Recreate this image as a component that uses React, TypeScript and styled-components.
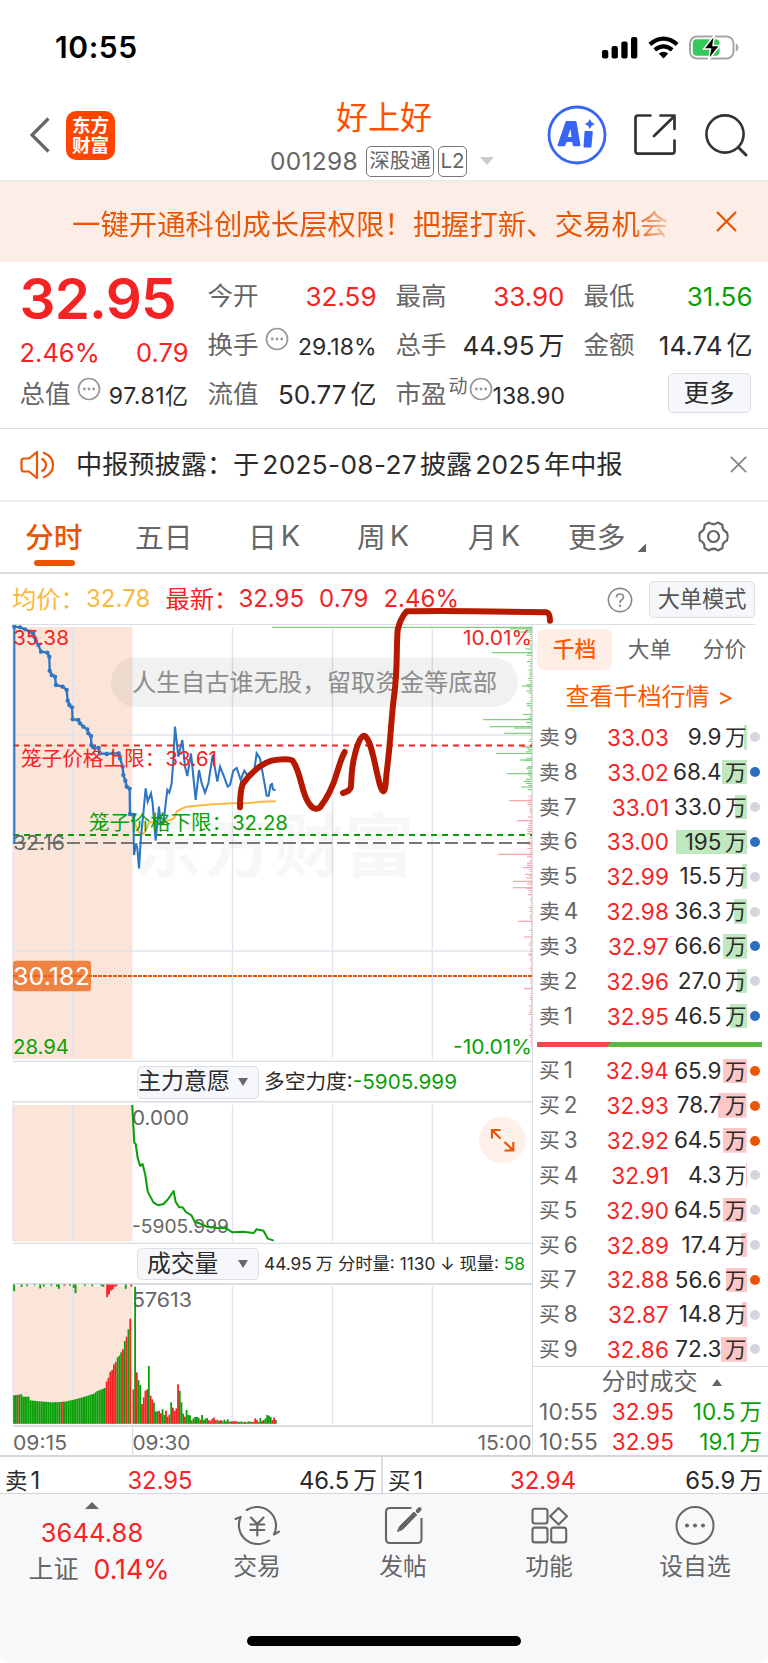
import React from "react";
import styled, { createGlobalStyle } from "styled-components";

const RED = "#f52323";
const GREEN = "#0a9f08";
const ORANGE = "#ea5504";
const GREY = "#666666";
const INK = "#2b2b2b";
const LINE = "#dcdde3";
const PEACH = "#fbe5d9";
const FONT = `Inter, "Noto Sans CJK SC", sans-serif`;

const Global = createGlobalStyle`
  * { box-sizing: border-box; }
  body { margin: 0; background: #fff; font-family: ${FONT}; color: ${INK}; }
  svg { display: block; flex: none; }
`;

const Page = styled.div`
  position: relative;
  width: 768px;
  height: 1663px;
  overflow: hidden;
  background: #fff;
  white-space: nowrap;
`;

const Txt = styled.span<{ $s: number; $c?: string; $ls?: number; $w?: number; $ml?: number }>`
  font-size: ${(p) => p.$s}px;
  line-height: 1.2;
  color: ${(p) => p.$c || INK};
  letter-spacing: ${(p) => p.$ls || 0}px;
  font-weight: ${(p) => p.$w || 400};
  margin-left: ${(p) => p.$ml || 0}px;
  white-space: nowrap;
`;
const Unit = styled.span`
  margin-left: 4px;
`;

/* ---------- status bar ---------- */
const StatusBar = styled.div`
  height: 90px;
  padding: 4px 29px 0 55px;
  display: flex;
  align-items: center;
  justify-content: space-between;
`;
const StatusIcons = styled.div`
  display: flex;
  align-items: center;
  gap: 10px;
`;

/* ---------- header ---------- */
const Header = styled.header`
  height: 92px;
  border-bottom: 2px solid #ececee;
  display: grid;
  grid-template-columns: 230px 1fr 230px;
  padding: 0 19px 0 29px;
`;
const HeaderLeft = styled.div`
  display: flex;
  align-items: center;
  gap: 15px;
`;
const Logo = styled.div`
  width: 49px;
  height: 49px;
  border-radius: 10px;
  background: #ff4400;
  color: #fff;
  font: 700 18.5px/20px ${FONT};
  display: flex;
  flex-direction: column;
  align-items: center;
  justify-content: center;
`;
const HeaderTitle = styled.div`
  display: flex;
  flex-direction: column;
  align-items: center;
  padding: 9px 10px 0 0;
`;
const CodeLine = styled.div`
  display: flex;
  align-items: center;
  margin: 8px 0 0 -4px;
  height: 32px;
`;
const Tag = styled.span<{ $w: number; $gap: number }>`
  width: ${(p) => p.$w}px;
  height: 31px;
  margin-left: ${(p) => p.$gap}px;
  border: 1.5px solid #777;
  border-radius: 5px;
  color: ${GREY};
  font-size: 20.5px;
  line-height: 27px;
  text-align: center;
`;
const Caret = styled.span<{ $w: number; $h: number; $c?: string; $up?: boolean; $ml?: number }>`
  width: 0;
  height: 0;
  flex: none;
  margin-left: ${(p) => p.$ml || 0}px;
  border: solid transparent;
  border-width: 0 ${(p) => p.$w / 2}px;
  ${(p) => (p.$up ? "border-bottom" : "border-top")}: ${(p) => p.$h}px solid ${(p) => p.$c || GREY};
`;
const HeaderRight = styled.div`
  display: flex;
  align-items: center;
  justify-content: flex-end;
  padding-right: 1px;
  gap: 27px;
  > :last-child {
    margin-left: 2px;
  }
`;

/* ---------- promo banner ---------- */
const Promo = styled.div`
  height: 80px;
  background: #fceee6;
  padding: 0 31px 0 72px;
  display: flex;
  align-items: center;
  justify-content: space-between;
  svg {
    margin-bottom: 2px;
  }
`;
const PromoText = styled.span`
  font-size: 28.4px;
  background: linear-gradient(90deg, ${ORANGE} 94%, #fceee6 102%);
  background-clip: text;
  -webkit-background-clip: text;
  color: transparent;
`;

/* ---------- figures ---------- */
const Figures = styled.section`
  height: 167px;
  border-bottom: 1.5px solid #dedfe2;
  padding: 9.5px 15.5px 0 19.5px;
  display: grid;
  grid-template-columns: repeat(4, 169px);
  column-gap: 19px;
`;
const FigCol = styled.div`
  display: flex;
  flex-direction: column;
`;
const Fig = styled.div<{ $drop?: number; $all?: boolean }>`
  height: 49.3px;
  display: flex;
  align-items: center;
  justify-content: space-between;
  padding-top: ${(p) => (p.$all ? (p.$drop || 0) * 2 : 0)}px;
  > :last-child {
    margin-top: ${(p) => (p.$all ? 0 : (p.$drop || 0) * 2)}px;
  }
`;
const LabelGroup = styled.div`
  display: flex;
  align-items: center;
  svg {
    margin: 0 0 12px 6px;
  }
`;
const Sup = styled.span`
  font-size: 19px;
  line-height: 24px;
  color: ${GREY};
  margin: 0 -5px 16px 2px;
`;
const Button = styled.button<{ $w: number; $h: number; $s: number; $c?: string; $ml?: number; $mr?: number }>`
  width: ${(p) => p.$w}px;
  height: ${(p) => p.$h}px;
  flex: none;
  margin: 0 ${(p) => p.$mr || 0}px 0 ${(p) => p.$ml || 0}px;
  padding: 0;
  border: 1.5px solid #dcdee3;
  border-radius: 5px;
  background: #f6f7fa;
  color: ${(p) => p.$c || INK};
  font: 400 ${(p) => p.$s}px ${FONT};
  line-height: 1.2;
  display: flex;
  align-items: center;
  justify-content: center;
`;

/* ---------- news ---------- */
const News = styled.div`
  height: 73px;
  border-bottom: 2px solid #ececee;
  padding: 0 21px 4px 20px;
  display: flex;
  align-items: center;
  svg {
    position: relative;
    top: 2px;
  }
`;
const NewsText = styled.span`
  flex: 1;
  margin-left: 21px;
  font-size: 26.2px;
  b {
    font-weight: 400;
    margin: 0 3px;
    letter-spacing: 0.35px;
  }
`;

/* ---------- tabs ---------- */
const Tabs = styled.nav`
  height: 72px;
  border-bottom: 2px solid #d9dbe3;
  padding: 0 38px 3px 25px;
  display: grid;
  grid-template-columns: 110px 113px 109px 111px 100px 128px 1fr;
  align-items: center;
  svg {
    margin: 2px 0 0 1px;
  }
`;
const Tab = styled.div<{ $on?: boolean }>`
  position: relative;
  font-size: 28.8px;
  font-weight: ${(p) => (p.$on ? 500 : 400)};
  color: ${(p) => (p.$on ? ORANGE : GREY)};
  display: flex;
  align-items: center;
  gap: 4px;
  &::after {
    content: "";
    display: ${(p) => (p.$on ? "block" : "none")};
    position: absolute;
    left: 9px;
    width: 41px;
    bottom: -10px;
    height: 6px;
    border-radius: 3px;
    background: ${ORANGE};
  }
`;
const Corner = styled.span`
  width: 8px;
  height: 9px;
  margin: 23px 0 0 8px;
  background: linear-gradient(135deg, transparent 50%, ${GREY} 50%);
`;

/* ---------- quote line ---------- */
const QuoteLine = styled.div`
  height: 51px;
  margin: 0 13px 0 12px;
  padding-top: 1.5px;
  border-bottom: 1.5px solid ${LINE};
  display: flex;
  align-items: center;
`;
const Spring = styled.span`
  flex: 1;
`;

/* ---------- main ---------- */
const Main = styled.main`
  height: 832px;
  display: grid;
  grid-template-columns: 532px 236px;
  border-bottom: 2px solid #d3d6dc;
`;
const ChartCol = styled.div`
  display: flex;
  flex-direction: column;
  min-width: 0;
`;
const PanelBar = styled.div`
  height: 39px;
  padding: 1px 0 0 137px;
  display: flex;
  align-items: center;
  gap: 5px;
`;
const Picker = styled(Button)<{ $pl?: number }>`
  justify-content: space-between;
  padding: 0 10px 0 ${(p) => p.$pl || 0}px;
`;

/* ---------- order book ---------- */
const Book = styled.aside`
  border-left: 1.5px solid ${LINE};
  display: flex;
  flex-direction: column;
`;
const BookTabs = styled.div`
  display: flex;
  height: 41px;
  margin: 4px 2px 0 4px;
  font-size: 21.8px;
  color: ${GREY};
`;
const BookTab = styled.span<{ $on?: boolean }>`
  width: 75px;
  padding-bottom: 4px;
  border-radius: 7px;
  display: flex;
  align-items: center;
  justify-content: center;
  background: ${(p) => (p.$on ? "#ffeee6" : "none")};
  color: ${(p) => (p.$on ? "#ff5a00" : GREY)};
  font-weight: ${(p) => (p.$on ? 500 : 400)};
`;
const BookLink = styled.div`
  height: 50px;
  padding: 5px 2px 0 0;
  text-align: center;
  font-size: 24px;
  line-height: 44px;
  color: #ff5a00;
  b {
    font-weight: 400;
    margin-left: 8px;
  }
`;
const Level = styled.div`
  height: 34.83px;
  padding-left: 6px;
  display: grid;
  grid-template-columns: 50px 80px 77.5px 3px 10px;
  align-items: center;
  font-size: 22.5px;
`;
const Side = styled.span`
  color: ${GREY};
  line-height: 30px;
  i {
    font-style: normal;
    font-size: 20.8px;
    margin-right: 4px;
  }
`;
const Price = styled.span`
  color: ${RED};
  text-align: right;
  letter-spacing: 0.15px;
`;
const Volume = styled.span<{ $bar: number; $tint: string }>`
  height: 24.5px;
  line-height: 24.5px;
  text-align: right;
  background: linear-gradient(${(p) => p.$tint}, ${(p) => p.$tint}) right / ${(p) => p.$bar}px 100% no-repeat;
  i {
    font-style: normal;
    font-size: 21.5px;
    margin-left: 3.5px;
  }
`;
const Dot = styled.span<{ $c: string }>`
  width: 10px;
  height: 10px;
  border-radius: 50%;
  background: ${(p) => p.$c};
`;
const Ratio = styled.div`
  height: 5px;
  margin: 9px 6px 6px 4px;
  flex: none;
  background: linear-gradient(135deg, #e84c4c 32.3%, #5abb44 32.3%);
`;
const TicksHead = styled.div`
  height: 32px;
  margin-top: -1px;
  border-top: 1.5px solid ${LINE};
  padding: 0 0 0 22px;
  display: flex;
  align-items: center;
  justify-content: center;
  gap: 14px;
  font-size: 24px;
  line-height: 28px;
  color: ${GREY};
`;
const Tick = styled.div`
  height: 30px;
  padding: 0 6px 2px 6px;
  display: grid;
  grid-template-columns: 70px 65px 1fr;
  align-items: center;
  font-size: 22.5px;
  line-height: 28px;
  span:last-child {
    text-align: right;
    color: ${GREEN};
  }
`;

/* ---------- best bid / ask ---------- */
const Best = styled.div`
  height: 37px;
  border-bottom: 1.5px solid #d3d6dc;
  display: grid;
  grid-template-columns: 383px 385px;
  overflow: hidden;
`;
const BestSide = styled.div`
  display: grid;
  grid-template-columns: 100px 110px 1fr;
  align-items: start;
  padding: 10.5px 5px 0 5px;
  font-size: 23.8px;
  line-height: 25px;
  &:first-child {
    border-right: 2px solid ${LINE};
    padding-right: 4px;
  }
  > :nth-child(2) {
    text-align: center;
    color: ${RED};
  }
  > :last-child {
    text-align: right;
  }
  i {
    font-style: normal;
    font-size: 22.5px;
    margin-right: 3px;
  }
`;

/* ---------- bottom nav ---------- */
const Nav = styled.footer`
  height: 169px;
  background: #f7f8fa;
  border-radius: 0 0 12px 12px;
  display: grid;
  grid-template-columns: 184px 146px 146px 146px 146px;
  align-content: start;
  position: relative;
`;
const Index = styled.div`
  display: flex;
  flex-direction: column;
  align-items: center;
  padding-top: 8px;
  gap: 9px;
`;
const IndexName = styled.div`
  height: 30px;
  margin: -4px 0 0 14px;
  display: flex;
  align-items: center;
`;
const NavItem = styled.div`
  display: flex;
  flex-direction: column;
  align-items: center;
  padding-top: 11px;
  gap: 6px;
`;
const Home = styled.div`
  position: absolute;
  left: 247px;
  bottom: 17px;
  width: 274px;
  height: 10px;
  border-radius: 5px;
  background: #000;
`;
const Overlay = styled.svg`
  position: absolute;
  left: 220px;
  top: 600px;
  pointer-events: none;
`;

/* ---------- chart data ---------- */
const auction =
  "43,50 60,52 75,58 90,65 100,72 104,82 108,92 115,105 123,125 142,128 148,140 149,182 155,195 165,200 168,225 188,230 200,240 203,272 208,285 216,292 218,328 235,330 240,340 250,350 262,358 265,370 273,378 274,405 280,412 296,414 300,430 320,432 340,430 356,430 360,445 368,470 370,495 376,512 380,530 389,536 390,612 400,615";
const session =
  "400,615 402,735 408,700 412,715 417,775 423,680 430,610 437,535 443,575 453,550 458,580 467,692 477,590 482,640 490,640 502,540 508,548 515,520 520,450 525,350 535,440 547,390 555,470 562,498 573,430 580,500 587,570 597,480 605,520 615,548 625,520 638,435 645,475 652,515 660,470 672,500 683,530 690,525 700,482 710,474 722,510 733,482 745,500 755,485 763,480 770,430 780,445 790,500 800,557 806,557 812,524 816,522 819,538 824,540";
const average =
  "400,615 408,650 418,668 430,672 438,660 448,635 470,640 490,635 510,630 522,625 530,605 545,596 560,590 590,587 640,583 700,580 750,579 780,575 825,574";
const force =
  "384,645 390,758 394,762 400,805 407,828 414,822 422,855 429,905 446,938 460,946 475,942 490,925 504,903 510,935 520,952 530,952 540,966 556,976 566,996 580,1000 600,1010 630,1014 655,1014 675,1027 705,1025 737,1029 745,1018 765,1022 778,1046 795,1052";

const depthLong: [number, number][] = [
  [272, 627.3], [510, 628.8], [514, 632], [492, 652.7], [522, 686], [523, 714.5], [483, 719.7], [490, 726.7], [514, 728], [504, 733.3],
  [521, 747], [496, 753.5], [520, 760], [527, 767], [507, 773.7], [521, 787], [509, 800.7], [517, 820.7], [524, 843], [498, 854.3],
  [523, 867.5], [525, 874.5], [513, 881.3], [513, 887.7], [518, 921.3], [524, 937], [528, 955], [524, 988.6],
];
const depthShort = Array.from({ length: 200 }, (_, i) => {
  const y = 628 + i * 2.1;
  const n = Math.abs(Math.sin(i * 12.9898) * 43758.5) % 1;
  const peak = y < 650 ? 6 : y > 720 && y < 790 ? 8 : y < 895 ? 5 : 2.5;
  return [532 - 0.9 - n * n * peak, y] as [number, number];
});

const auctionTops = Array.from({ length: 65 }, (_, i) => {
  const keys: [number, number][] = [
    [0, 466], [4, 463], [5, 470], [8, 470], [9, 481], [12, 483], [21, 487], [28, 485], [33, 479], [39, 470], [44, 461], [46, 453],
    [50, 444], [51, 424], [52, 413], [53, 395], [54, 390], [55, 373], [56, 366], [57, 352], [58, 347], [59, 337], [60, 328], [61, 303],
    [62, 290], [63, 268], [64, 236],
  ];
  let k = 0;
  while (k < keys.length - 2 && keys[k + 1][0] <= i) k++;
  const [a, ya] = keys[k];
  const [b, yb] = keys[k + 1];
  return ya + ((yb - ya) * (i - a)) / (b - a);
});
const auctionRed = new Set([2, 27, 51, 52, 53, 54, 55, 56, 60, 62, 64]);
const topTicks: [number, number, string][] = [
  [0, 20, "g"], [4, 7, "g"], [7, 5, "g"], [11, 3, "g"], [14, 12, "g"], [16, 6, "g"], [20, 4, "g"], [23, 6, "g"], [24, 13, "g"],
  [27, 4, "r"], [30, 4, "g"], [32, 10, "g"], [33, 26, "g"], [38, 4, "g"], [42, 5, "g"], [47, 5, "g"], [48, 7, "g"], [50, 38, "r"],
  [51, 30, "r"], [52, 18, "r"], [53, 15, "r"], [54, 7, "r"], [55, 5, "r"], [60, 13, "g"], [63, 6, "r"],
];
const sessionBars =
  "448r 140g 397r 420g 435g 492r 472r 452r 448r 378g 467r 478r 488g 514g 514g 512r 520r 508g 525g 512r 530r 524r 487g 503r 513r 505r 433r 452g 487g 521g 530r 510g 525g 526g 541r 535g 531g 531g 533g 539r 525g 540g 536g 534g 541r 542r 536r 533r 541g 539r 543g 540r 544g 539g 544g 538g 545r 544g 544r 543r 544r 545g 546g 544g 547g 545r 547g 544g 545g 546r 545r 535r 540r 546g 534g 543r 540g 535g 525g 527g 531g 540r 533r 540g";

type LabelProps = { x: number; y: number; s?: number; w: number; c?: string; end?: boolean; children: string };
const P = ({ x, y, s = 20, w, c = GREY, children, end }: LabelProps) => (
  <text x={x} y={y} fontSize={s} fill={c} textLength={w} lengthAdjust="spacingAndGlyphs" textAnchor={end ? "end" : "start"} fontFamily={FONT}>
    {children}
  </text>
);

const Grid = ({ top, bottom }: { top: number; bottom: number }) => (
  <g>
    <rect x="13" y={top} width="119.5" height={bottom - top} fill={PEACH} />
    <path
      d={`M72.7 ${top}V${bottom}M232.5 ${top}V${bottom}M332.5 ${top}V${bottom}M432.3 ${top}V${bottom}M13 ${top - 4}V${bottom}`}
      stroke="#e1e4ee"
      strokeWidth="1.4"
    />
  </g>
);

const PriceChart = () => (
  <svg width="532" height="437" viewBox="0 625 532 437">
    <Grid top={627} bottom={1059} />
    <path d="M13 735H533M13 951H533" stroke="#e1e4ee" strokeWidth="1.6" />
    <text x="132" y="872" fontSize="70" fontWeight="700" fill="#000" opacity=".026" textLength="282" fontFamily={FONT}>东方财富</text>
    {depthLong.concat(depthShort).map(([x, y], i) => (
      <path key={i} d={`M${x} ${y}H532`} stroke={y < 791 ? "#7fd07f" : "#f9a3a8"} strokeWidth="1.2" />
    ))}
    <path d="M13 745.5H533" stroke={RED} strokeWidth="2" strokeDasharray="6 5" />
    <path d="M13 835H533" stroke={GREEN} strokeWidth="2.1" strokeDasharray="6 5" />
    <path d="M13 843H533" stroke="#777" strokeWidth="1.8" strokeDasharray="13 5" />
    <rect x="111" y="657.5" width="407" height="49.5" rx="24.7" fill="#777" opacity=".1" />
    <P x={132} y={690.5} s={24.3} w={365} c="#8d8d8d">人生自古谁无股，留取资金等底部</P>
    <g transform="translate(0 610) scale(.33333)" fill="none" strokeLinejoin="round" strokeLinecap="round">
      <polyline points={average} stroke="#fbb93c" strokeWidth="6" />
      <path d="M43 50V698" stroke="#2f76c2" strokeWidth="6" />
      <polyline points={auction} stroke="#2f76c2" strokeWidth="7" />
      {auction.split(" ").map((p, i) => {
        const [cx, cy] = p.split(",");
        return <circle key={i} cx={cx} cy={cy} r="6.5" fill="#2f76c2" />;
      })}
      <polyline points={session} stroke="#2f76c2" strokeWidth="6.2" strokeLinejoin="miter" />
    </g>
    <P x={13} y={644.5} w={56} c={RED}>35.38</P>
    <P x={532} y={644.5} w={69} c={RED} end>10.01%</P>
    <P x={21} y={766} w={196} c={RED}>笼子价格上限：33.61</P>
    <P x={89} y={830} w={199} c={GREEN}>笼子价格下限：32.28</P>
    <P x={13} y={850} w={52}>32.16</P>
    <path d="M13 976H533" stroke={ORANGE} strokeWidth="2" strokeDasharray="4 1" />
    <rect x="13" y="960.7" width="78" height="30.5" rx="3" fill="#f08243" />
    <path d="M13 976H91" stroke={ORANGE} strokeWidth="2" strokeDasharray="4 1" opacity=".7" />
    <P x={13} y={985} s={24} w={77} c="#fff">30.182</P>
    <P x={13} y={1054} w={56} c={GREEN}>28.94</P>
    <P x={532} y={1054} w={79} c={GREEN} end>-10.01%</P>
    <path d="M13 1061.4H533" stroke={LINE} strokeWidth="1.3" />
  </svg>
);

const ForceChart = () => (
  <svg width="532" height="143" viewBox="0 1101 532 143">
    <path d="M13 1101.7H533M13 1243.4H533" stroke={LINE} strokeWidth="1.4" />
    <Grid top={1105} bottom={1241.5} />
    <P x={132} y={1124.5} w={57}>0.000</P>
    <P x={132} y={1233} s={19} w={97}>-5905.999</P>
    <g transform="translate(0 890) scale(.34435 .33333)">
      <polyline points={force} fill="none" stroke={GREEN} strokeWidth="6" strokeLinejoin="round" />
    </g>
    <circle cx="502.3" cy="1140" r="23.3" fill="#fef1ea" />
    <path
      d="M492 1138.5V1130H500.5M492 1130L500.5 1138.7M513.3 1142V1150.5H504.5M513.3 1150.5L504.5 1142"
      fill="none"
      stroke={ORANGE}
      strokeWidth="2.2"
    />
  </svg>
);

const VolumeChart = () => (
  <svg width="532" height="173" viewBox="0 1283 532 173">
    <path d="M13 1284H533M13 1426H533" stroke={LINE} strokeWidth="1.8" />
    <path d="M132.5 1426V1456" stroke={LINE} strokeWidth="1.2" />
    <Grid top={1286} bottom={1424} />
    <P x={132} y={1306.5} w={60}>57613</P>
    {auctionTops.map((t, i) => {
      const y = 1240 + t / 3;
      return <rect key={i} x={13.2 + i * 1.815} y={y} width="1.78" height={1423.8 - y} fill={auctionRed.has(i) ? RED : GREEN} />;
    })}
    {topTicks.map(([i, h, c], k) => (
      <rect key={k} x={13.2 + i * 1.86} y="1284.5" width="1.9" height={h / 3} fill={c === "r" ? RED : GREEN} />
    ))}
    {sessionBars.split(" ").map((b, i) => {
      const y = 1240 + parseInt(b, 10) / 3;
      return <rect key={i} x={132.5 + i * 1.716} y={y} width="1.8" height={1423.8 - y} fill={b.endsWith("r") ? RED : GREEN} />;
    })}
    <P x={13} y={1449.5} w={54}>09:15</P>
    <P x={132.5} y={1449.5} w={58}>09:30</P>
    <P x={531.5} y={1449.5} w={54} end>15:00</P>
  </svg>
);

const Dots = () => (
  <svg width="24" height="24" viewBox="0 0 24 24">
    <circle cx="12" cy="12" r="10.5" fill="none" stroke="#999" strokeWidth="1.7" />
    <g fill="#999">
      <circle cx="7.3" cy="12" r="1.4" />
      <circle cx="12" cy="12" r="1.4" />
      <circle cx="16.7" cy="12" r="1.4" />
    </g>
  </svg>
);

const Cross = ({ size, color }: { size: number; color: string }) => (
  <svg width={size} height={size} viewBox="0 0 20 20">
    <path d="M1 1L19 19M19 1L1 19" stroke={color} strokeWidth="2.2" />
  </svg>
);

type Row = [number, string, string, number, number];
const sells: Row[] = [
  [9, "33.03", "9.9", 3, 0], [8, "33.02", "68.4", 25, 1], [7, "33.01", "33.0", 12, 0], [6, "33.00", "195", 71, 1], [5, "32.99", "15.5", 5, 0],
  [4, "32.98", "36.3", 13, 0], [3, "32.97", "66.6", 24, 1], [2, "32.96", "27.0", 10, 0], [1, "32.95", "46.5", 17, 1],
];
const buys: Row[] = [
  [1, "32.94", "65.9", 24, 1], [2, "32.93", "78.7", 28.5, 1], [3, "32.92", "64.5", 23.5, 1], [4, "32.91", "4.3", 1, 0], [5, "32.90", "64.5", 23.5, 0],
  [6, "32.89", "17.4", 6, 0], [7, "32.88", "56.6", 21, 1], [8, "32.87", "14.8", 5, 0], [9, "32.86", "72.3", 26, 0],
];

const Levels = ({ side, rows }: { side: "卖" | "买"; rows: Row[] }) => (
  <>
    {rows.map(([n, price, vol, bar, dot]) => (
      <Level key={n}>
        <Side><i>{side}</i>{n}</Side>
        <Price>{price}</Price>
        <Volume $bar={bar} $tint={side === "卖" ? "#bfe8bf" : "#fdc7c8"}>{vol}<i>万</i></Volume>
        <span />
        <Dot $c={!dot ? "#d3d6dd" : side === "卖" ? "#2c6fc0" : ORANGE} />
      </Level>
    ))}
  </>
);

export default function App() {
  return (
    <Page>
      <Global />
      <StatusBar>
        <Txt $s={30} $w={600} $c="#000" $ls={0.6}>10:55</Txt>
        <StatusIcons>
          <svg width="36" height="23" viewBox="0 0 36 23">
            <rect x="0" y="14" width="6.3" height="8.5" rx="2" />
            <rect x="9.6" y="10" width="6.3" height="12.5" rx="2" />
            <rect x="19.3" y="5.5" width="6.3" height="17" rx="2" />
            <rect x="29" y="1" width="6.3" height="21.5" rx="2" />
          </svg>
          <svg width="31" height="23" viewBox="0 0 31 23">
            <g fill="none" stroke="#000" strokeWidth="4.2">
              <path d="M1.8 8.4Q15.5 -3 29.2 8.4" />
              <path d="M6.8 13.8Q15.5 6.8 24.2 13.8" />
            </g>
            <path d="M10.8 17.4Q15.5 14 20.2 17.4L15.5 22.4Z" />
          </svg>
          <svg width="50" height="25" viewBox="0 0 50 25">
            <rect x="1" y="1.5" width="43.5" height="22" rx="7" fill="none" stroke="#a6a6a6" strokeWidth="2" />
            <path d="M46.8 8.5Q49.5 9.5 49.5 12.5Q49.5 15.5 46.8 16.5Z" fill="#a6a6a6" />
            <rect x="3.8" y="4.3" width="26.7" height="16.4" rx="4" fill="#34c759" />
            <path d="M25.5 0L14.5 14H21.5L19.5 25L31 10.5H24Z" fill="#000" stroke="#fff" strokeWidth="1.5" />
          </svg>
        </StatusIcons>
      </StatusBar>

      <Header>
        <HeaderLeft>
          <svg width="22" height="38" viewBox="0 0 22 38">
            <path d="M19.5 2.5L3 19L19.5 35.5" fill="none" stroke="#666" strokeWidth="3.2" />
          </svg>
          <Logo><span>东方</span><span>财富</span></Logo>
        </HeaderLeft>
        <HeaderTitle>
          <Txt $s={32} $c="#ff5000">好上好</Txt>
          <CodeLine>
            <Txt $s={24.5} $c={GREY} $ls={0.3}>001298</Txt>
            <Tag $w={68} $gap={8}>深股通</Tag>
            <Tag $w={29} $gap={4}>L2</Tag>
            <Caret $w={14} $h={8} $c="#ccc" $ml={13} />
          </CodeLine>
        </HeaderTitle>
        <HeaderRight>
          <svg width="60" height="60" viewBox="0 0 60 60">
            <circle cx="30" cy="30" r="28" fill="none" stroke="#3766f5" strokeWidth="2.8" />
            <g fill="#3766f5" stroke="#3766f5" strokeWidth="2" strokeLinejoin="round">
              <path d="M19.5 17H28.5L32.5 40.3H26.8L26 36H19L17 40.3H11.5Z" />
              <path d="M38.5 27H44.8L43.5 41.5H37.5Z" />
            </g>
            <path d="M20.8 32L23.4 24L24.6 32Z" fill="#fff" />
            <path d="M42.8 14L44.6 17.2L47.8 19L44.6 20.8L42.8 24L41 20.8L37.8 19L41 17.2Z" fill="#3766f5" />
          </svg>
          <svg width="42" height="42" viewBox="0 0 42 42">
            <g fill="none" stroke="#333" strokeWidth="2.7" strokeLinecap="round" strokeLinejoin="round">
              <path d="M16.5 1.5H4Q1.5 1.5 1.5 4V37Q1.5 39.7 4 39.7H38Q40.5 39.7 40.5 37V26.5" />
              <path d="M26.5 1.5H40.5V15M40 2.5L20 22" />
            </g>
          </svg>
          <svg width="43" height="43" viewBox="0 0 43 43">
            <circle cx="20" cy="20" r="18.6" fill="none" stroke="#333" strokeWidth="2.6" />
            <path d="M33.5 33.5L41 41" stroke="#333" strokeWidth="3" strokeLinecap="round" />
          </svg>
        </HeaderRight>
      </Header>

      <Promo>
        <PromoText>一键开通科创成长层权限！把握打新、交易机会</PromoText>
        <Cross size={21} color={ORANGE} />
      </Promo>

      <Figures>
        <FigCol>
          <Fig $drop={3} $all><Txt $s={56.5} $w={600} $c={RED} $ls={-0.8}>32.95</Txt></Fig>
          <Fig $drop={7.5} $all>
            <Txt $s={25.5} $c={RED}>2.46%</Txt>
            <Txt $s={25.5} $c={RED}>0.79</Txt>
          </Fig>
          <Fig $drop={2}>
            <LabelGroup><Txt $s={25.5} $c={GREY}>总值</Txt><Dots /></LabelGroup>
            <Txt $s={23} $ls={0.5}>97.81亿</Txt>
          </Fig>
        </FigCol>
        <FigCol>
          <Fig><Txt $s={25.5} $c={GREY}>今开</Txt><Txt $s={26} $c={RED}>32.59</Txt></Fig>
          <Fig $drop={2.5}>
            <LabelGroup><Txt $s={25.5} $c={GREY}>换手</Txt><Dots /></LabelGroup>
            <Txt $s={23}>29.18%</Txt>
          </Fig>
          <Fig><Txt $s={25.5} $c={GREY}>流值</Txt><Txt $s={26}>50.77<Unit>亿</Unit></Txt></Fig>
        </FigCol>
        <FigCol>
          <Fig><Txt $s={25.5} $c={GREY}>最高</Txt><Txt $s={26} $c={RED}>33.90</Txt></Fig>
          <Fig><Txt $s={25.5} $c={GREY}>总手</Txt><Txt $s={26}>44.95<Unit>万</Unit></Txt></Fig>
          <Fig $drop={2}>
            <LabelGroup><Txt $s={25.5} $c={GREY}>市盈</Txt><Sup>动</Sup><Dots /></LabelGroup>
            <Txt $s={23}>138.90</Txt>
          </Fig>
        </FigCol>
        <FigCol>
          <Fig><Txt $s={25.5} $c={GREY}>最低</Txt><Txt $s={26} $c={GREEN}>31.56</Txt></Fig>
          <Fig><Txt $s={25.5} $c={GREY}>金额</Txt><Txt $s={26}>14.74<Unit>亿</Unit></Txt></Fig>
          <Fig $drop={-1.5}><span /><Button $w={83} $h={40} $s={25.5} $mr={2}>更多</Button></Fig>
        </FigCol>
      </Figures>

      <News>
        <svg width="35" height="30" viewBox="0 0 35 30">
          <g fill="none" stroke={ORANGE} strokeWidth="2.2" strokeLinejoin="round">
            <path d="M17 2V28L9 21.5H4Q1.5 21.5 1.5 19V11Q1.5 8.5 4 8.5H9Z" />
            <path d="M21.5 8.5Q26 11 26 15Q26 19 21.5 21.5M23 2.5Q33 6 33 15Q33 24 23 27.5" />
          </g>
        </svg>
        <NewsText>中报预披露：于<b>2025-08-27</b>披露<b>2025</b>年中报</NewsText>
        <Cross size={17} color="#888" />
      </News>

      <Tabs>
        <Tab $on>分时</Tab>
        <Tab>五日</Tab>
        <Tab>日<span>K</span></Tab>
        <Tab>周<span>K</span></Tab>
        <Tab>月<span>K</span></Tab>
        <Tab>更多<Corner /></Tab>
        <svg width="33" height="33" viewBox="0 0 33 33">
          <g fill="none" stroke={GREY} strokeWidth="2.2" strokeLinejoin="round">
            <path d="M12 2.500Q16.500 6 21 2.500L25.500 5Q25 10.500 30 12.500Q31.500 16.500 30 20.500Q25 22.500 25.500 28L21 30.500Q16.500 27 12 30.500L7.500 28Q8 22.500 3 20.500Q1.500 16.500 3 12.500Q8 10.500 7.500 5Z" />
            <circle cx="16.5" cy="16.5" r="5.5" />
          </g>
        </svg>
      </Tabs>

      <QuoteLine>
        <Txt $s={24.3} $c="#fbb93c">均价：</Txt>
        <Txt $s={24} $c="#fbb93c" $ml={1} $ls={0.1}>32.78</Txt>
        <Txt $s={24.3} $c={RED} $ml={15}>最新：</Txt>
        <Txt $s={24} $c={RED}>32.95</Txt>
        <Txt $s={24} $c={RED} $ml={15}>0.79</Txt>
        <Txt $s={24} $c={RED} $ml={15}>2.46%</Txt>
        <Spring />
        <svg width="26" height="26" viewBox="0 0 26 26">
          <circle cx="13" cy="13" r="11.6" fill="none" stroke="#8a8a8a" strokeWidth="1.6" />
          <path d="M9.5 10.5Q9.5 7 13 7Q16.5 7 16.5 10Q16.5 12 14.5 13Q13 14 13 16" fill="none" stroke="#8a8a8a" strokeWidth="1.7" />
          <circle cx="13" cy="18.8" r="1.2" fill="#8a8a8a" />
        </svg>
        <Button $w={106} $h={37} $s={22.2} $c="#555" $ml={16}>大单模式</Button>
      </QuoteLine>

      <Main>
        <ChartCol>
          <PriceChart />
          <PanelBar>
            <Picker $w={122} $h={33} $s={23}>主力意愿<Caret $w={10} $h={8} /></Picker>
            <Txt $s={20.7}>多空力度:<Txt $s={20.7} $c={GREEN}>-5905.999</Txt></Txt>
          </PanelBar>
          <ForceChart />
          <PanelBar>
            <Picker $w={122} $h={32} $s={23.8} $pl={9}>成交量<Caret $w={10} $h={8} /></Picker>
            <Txt $s={17.3}>44.95<Unit>万</Unit> 分时量: 1130 ↓ 现量: <Txt $s={17.3} $c={GREEN}>58</Txt></Txt>
          </PanelBar>
          <VolumeChart />
        </ChartCol>
        <Book>
          <BookTabs>
            <BookTab $on>千档</BookTab>
            <BookTab>大单</BookTab>
            <BookTab>分价</BookTab>
          </BookTabs>
          <BookLink>查看千档行情<b>&gt;</b></BookLink>
          <Levels side="卖" rows={sells} />
          <Ratio />
          <Levels side="买" rows={buys} />
          <TicksHead>分时成交<Caret $up $w={11} $h={7} /></TicksHead>
          <Tick><Txt $s={22.7} $c={GREY} $ls={0.3}>10:55</Txt><Price>32.95</Price><span>10.5<Unit>万</Unit></span></Tick>
          <Tick><Txt $s={22.7} $c={GREY} $ls={0.3}>10:55</Txt><Price>32.95</Price><span>19.1<Unit>万</Unit></span></Tick>
        </Book>
      </Main>

      <Best>
        <BestSide><span><i>卖</i>1</span><span>32.95</span><span>46.5<Unit>万</Unit></span></BestSide>
        <BestSide><span><i>买</i>1</span><span>32.94</span><span>65.9<Unit>万</Unit></span></BestSide>
      </Best>

      <Nav>
        <Index>
          <Caret $up $w={14} $h={7} />
          <Txt $s={25.5} $c={RED} $ls={0.1}>3644.88</Txt>
          <IndexName>
            <Txt $s={25} $c={GREY}>上证</Txt>
            <Txt $s={26.8} $c={RED} $ml={15}>0.14%</Txt>
          </IndexName>
        </Index>
        <NavItem>
          <svg width="46" height="42" viewBox="0 0 46 42">
            <g fill="none" stroke={GREY} strokeWidth="2.1" strokeLinecap="round" strokeLinejoin="round">
              <path d="M12.7 5A19 19 0 0 1 40 29.5L45 26.7" />
              <path d="M35 35.5A19 19 0 0 1 6.7 12L1.5 14" />
              <path d="M17 12.5L23.3 19L29.5 12.5M16.3 19.5H30.3M16.3 25H30.3M23.3 19V30.5" />
            </g>
          </svg>
          <Txt $s={23.8} $c={GREY}>交易</Txt>
        </NavItem>
        <NavItem>
          <svg width="40" height="42" viewBox="0 0 40 42">
            <path d="M28.5 3H7Q3 3 3 7V34Q3 38 7 38H34.5Q38.5 38 38.5 34V13" fill="none" stroke={GREY} strokeWidth="2.1" />
            <path d="M14.5 26.5L16.5 21.5L31 7L33.8 9.8L19.5 24.5Z" fill={GREY} stroke={GREY} strokeLinejoin="round" />
            <path d="M34.8 6L36.6 4.2" stroke={GREY} strokeWidth="4" strokeLinecap="round" />
          </svg>
          <Txt $s={23.8} $c={GREY}>发帖</Txt>
        </NavItem>
        <NavItem>
          <svg width="38" height="42" viewBox="0 0 38 42">
            <g fill="none" stroke={GREY} strokeWidth="2.1" strokeLinejoin="round">
              <rect x="2.5" y="3.7" width="15" height="14.8" rx="2.5" />
              <rect x="2.5" y="22.6" width="15" height="14.8" rx="2.5" />
              <rect x="21.2" y="22.6" width="15" height="14.8" rx="2.5" />
              <path d="M28.6 3L37 11.3L28.6 19.6L20.2 11.3Z" />
            </g>
          </svg>
          <Txt $s={23.8} $c={GREY}>功能</Txt>
        </NavItem>
        <NavItem>
          <svg width="42" height="42" viewBox="0 0 42 42">
            <circle cx="21" cy="20.5" r="18.5" fill="none" stroke={GREY} strokeWidth="2" />
            <g fill={GREY}>
              <circle cx="13" cy="20.5" r="2" />
              <circle cx="21" cy="20.5" r="2" />
              <circle cx="29" cy="20.5" r="2" />
            </g>
          </svg>
          <Txt $s={23.8} $c={GREY}>设自选</Txt>
        </NavItem>
        <Home />
      </Nav>

      <Overlay width="345" height="230" viewBox="0 0 1035 690">
        <g fill="none" stroke="#b51a00" strokeWidth="18" strokeLinecap="round" strokeLinejoin="round">
          <path d="M60 622C60 590 62 570 68 552C90 520 125 490 155 482C180 476 213 476 218 482C245 520 243 580 268 612C280 630 292 628 300 622C325 590 342 550 352 515C358 495 366 470 374 456" />
          <path d="M369 579C385 575 391 570 393 560C395 520 395 500 403 470C412 430 422 407 433 407C450 415 460 470 468 505C478 550 483 572 490 574C498 570 496 545 502 500C512 420 514 350 522 290C534 200 528 150 533 90C540 60 550 45 560 34C650 32 830 34 980 37Q990 40 990 62" />
        </g>
      </Overlay>
    </Page>
  );
}
